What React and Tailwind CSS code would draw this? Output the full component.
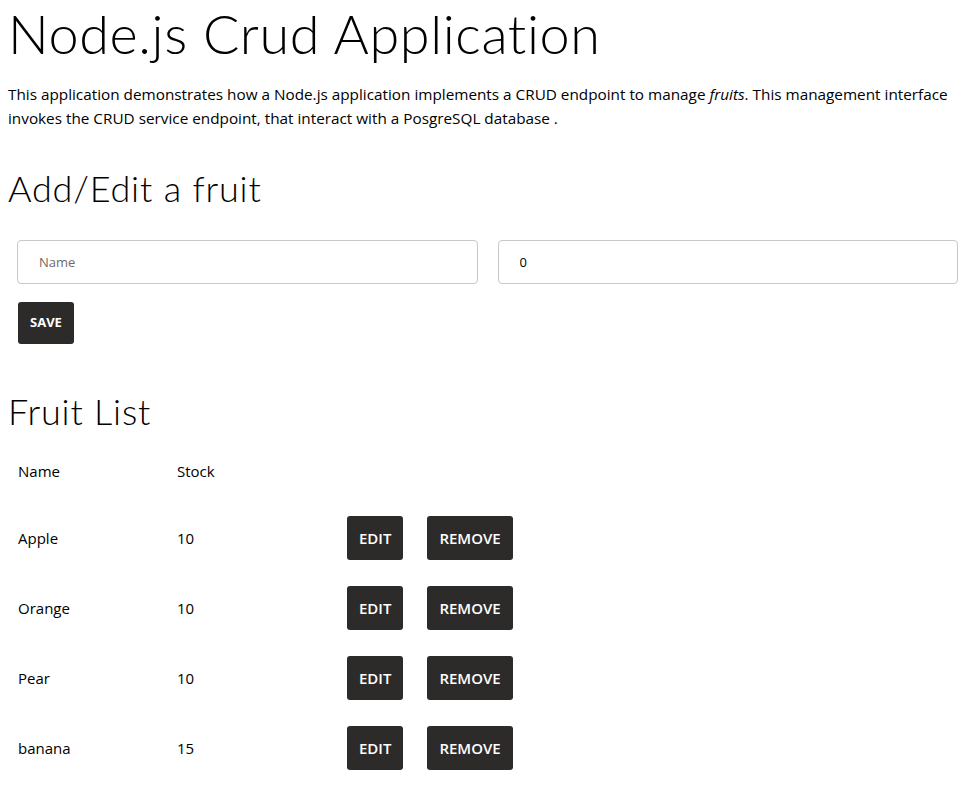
const fruits = [
  { name: 'Apple', stock: 10 },
  { name: 'Orange', stock: 10 },
  { name: 'Pear', stock: 10 },
  { name: 'banana', stock: 15 },
];

const App = () => {
  return (
    <div className="min-h-screen bg-white text-black px-2 font-['Open_Sans',sans-serif]">
      <h1 className="font-['Lato',sans-serif] font-light text-[54px] leading-[60px] pt-[4px] tracking-[0.6px]">
        Node.js Crud Application
      </h1>
      <p className="mt-[18px] text-[15.3px] leading-[24px]">
        This application demonstrates how a Node.js application implements a CRUD endpoint to manage <i>fruits</i>. This management interface invokes the CRUD service endpoint, that interact with a PosgreSQL database .
      </p>

      <h2 className="font-['Lato',sans-serif] font-light text-[36px] leading-[44px] mt-[36px] tracking-[0.8px]">
        Add/Edit a fruit
      </h2>
      <div className="grid grid-cols-2 gap-5 mt-[30px] pl-[9px] pr-[4px]">
        <input
          placeholder="Name"
          className="h-[44px] border border-[#c8c8c8] rounded-[4px] px-[21px] text-[13px] placeholder:text-[#6b6b6b] outline-none"
        />
        <input
          defaultValue="0"
          className="h-[44px] border border-[#c8c8c8] rounded-[4px] px-[21px] text-[13px] outline-none"
        />
      </div>
      <div className="pl-[10px] mt-[18px]">
        <button className="bg-[#2d2b2a] text-white text-[13px] font-bold h-[42px] px-[12px] rounded-[3px]">
          SAVE
        </button>
      </div>

      <h2 className="font-['Lato',sans-serif] font-light text-[36px] leading-[44px] mt-[45px] tracking-[0.8px]">
        Fruit List
      </h2>
      <table className="ml-[10px] mt-[6px] text-[15px] border-collapse">
        <thead>
          <tr className="h-[64px] text-left">
            <th className="font-normal w-[159px] p-0">Name</th>
            <th className="font-normal w-[170px] p-0">Stock</th>
            <th className="p-0"></th>
          </tr>
        </thead>
        <tbody>
          {fruits.map((f) => (
            <tr key={f.name} className="h-[70px]">
              <td className="p-0">{f.name}</td>
              <td className="p-0">{f.stock}</td>
              <td className="p-0">
                <div className="flex gap-6">
                  <button className="bg-[#2d2b2a] text-white text-[15px] font-semibold h-[44px] px-[12px] rounded-[3px]">
                    EDIT
                  </button>
                  <button className="bg-[#2d2b2a] text-white text-[15px] font-semibold h-[44px] px-[12px] rounded-[3px]">
                    REMOVE
                  </button>
                </div>
              </td>
            </tr>
          ))}
        </tbody>
      </table>
    </div>
  );
};

export default App;
